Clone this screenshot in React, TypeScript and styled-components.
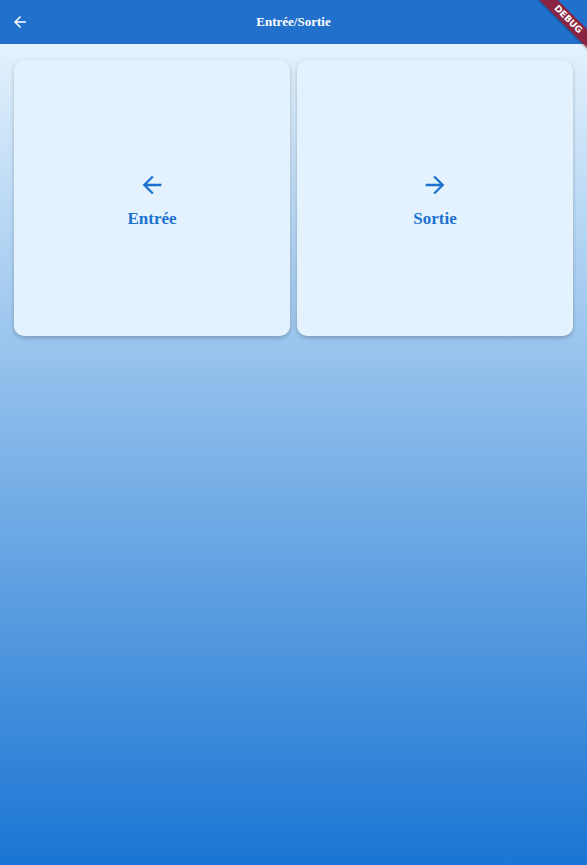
import React from 'react';
import styled, { createGlobalStyle } from 'styled-components';

const GlobalStyle = createGlobalStyle`
  html, body {
    margin: 0;
    padding: 0;
    height: 100%;
  }
  body {
    font-family: "Liberation Serif", "Times New Roman", serif;
  }
  #root {
    min-height: 100%;
  }
`;

// --- Styled Components ---
const Page = styled.div`
  position: relative;
  width: 100%;
  height: 865px;
  display: flex;
  flex-direction: column;
  overflow: hidden;
`;

const AppBar = styled.header`
  height: 44px;
  flex-shrink: 0;
  background: #2170cc;
  display: flex;
  align-items: center;
  position: relative;
  z-index: 1;
`;

const BackButton = styled.button`
  width: 40px;
  height: 44px;
  padding: 0;
  background: none;
  border: none;
  color: white;
  display: flex;
  align-items: center;
  justify-content: center;
  cursor: pointer;
`;

const AppBarTitle = styled.h1`
  flex: 1;
  margin: 0 40px 0 0;
  text-align: center;
  color: white;
  font-size: 13px;
  font-weight: 700;
`;

const Body = styled.main`
  flex: 1;
  background: linear-gradient(to bottom, #e3f2fd 0%, #1a75d3 100%);
  padding: 16px 14px;
`;

const CardGrid = styled.div`
  display: grid;
  grid-template-columns: 276px 276px;
  column-gap: 7px;
`;

const Card = styled.button`
  height: 276px;
  background: #e3f2fd;
  border: none;
  border-radius: 10px;
  box-shadow: 0 2px 4px rgba(0, 0, 0, 0.22);
  display: flex;
  flex-direction: column;
  align-items: center;
  justify-content: center;
  gap: 10px;
  color: #1d72d0;
  cursor: pointer;
  padding: 4px 0 0 0;
`;

const CardLabel = styled.span`
  font-family: "Liberation Serif", "Times New Roman", serif;
  font-size: 17px;
  font-weight: 700;
  color: #1d72d0;
`;

const BannerCorner = styled.div`
  position: absolute;
  top: 0;
  right: 0;
  width: 60px;
  height: 60px;
  overflow: hidden;
  pointer-events: none;
  z-index: 2;
`;

const BannerStrip = styled.div`
  position: absolute;
  top: 13px;
  right: -31px;
  width: 100px;
  height: 13px;
  background: rgba(150, 28, 50, 0.9);
  transform: rotate(45deg);
  color: white;
  font-family: "DejaVu Sans", sans-serif;
  font-size: 9px;
  font-weight: 700;
  line-height: 13px;
  text-align: center;
  box-shadow: 0 1px 2px rgba(0, 0, 0, 0.3);
`;

// --- Icons ---
const ArrowIcon: React.FC<{ dir: 'left' | 'right'; size: number }> = ({ dir, size }) => (
  <svg
    width={size}
    height={size}
    viewBox="0 0 24 24"
    fill="currentColor"
    style={dir === 'right' ? { transform: 'scaleX(-1)' } : undefined}
  >
    <path d="M20 11H7.83l5.59-5.59L12 4l-8 8 8 8 1.41-1.41L7.83 13H20v-2z" />
  </svg>
);

// --- Component ---
const App: React.FC = () => {
  return (
    <>
      <GlobalStyle />
      <Page>
        <AppBar>
          <BackButton aria-label="Retour">
            <ArrowIcon dir="left" size={18} />
          </BackButton>
          <AppBarTitle>Entrée/Sortie</AppBarTitle>
        </AppBar>
        <Body>
          <CardGrid>
            <Card>
              <ArrowIcon dir="left" size={28} />
              <CardLabel>Entrée</CardLabel>
            </Card>
            <Card>
              <ArrowIcon dir="right" size={28} />
              <CardLabel>Sortie</CardLabel>
            </Card>
          </CardGrid>
        </Body>
        <BannerCorner>
          <BannerStrip>DEBUG</BannerStrip>
        </BannerCorner>
      </Page>
    </>
  );
};

export default App;
